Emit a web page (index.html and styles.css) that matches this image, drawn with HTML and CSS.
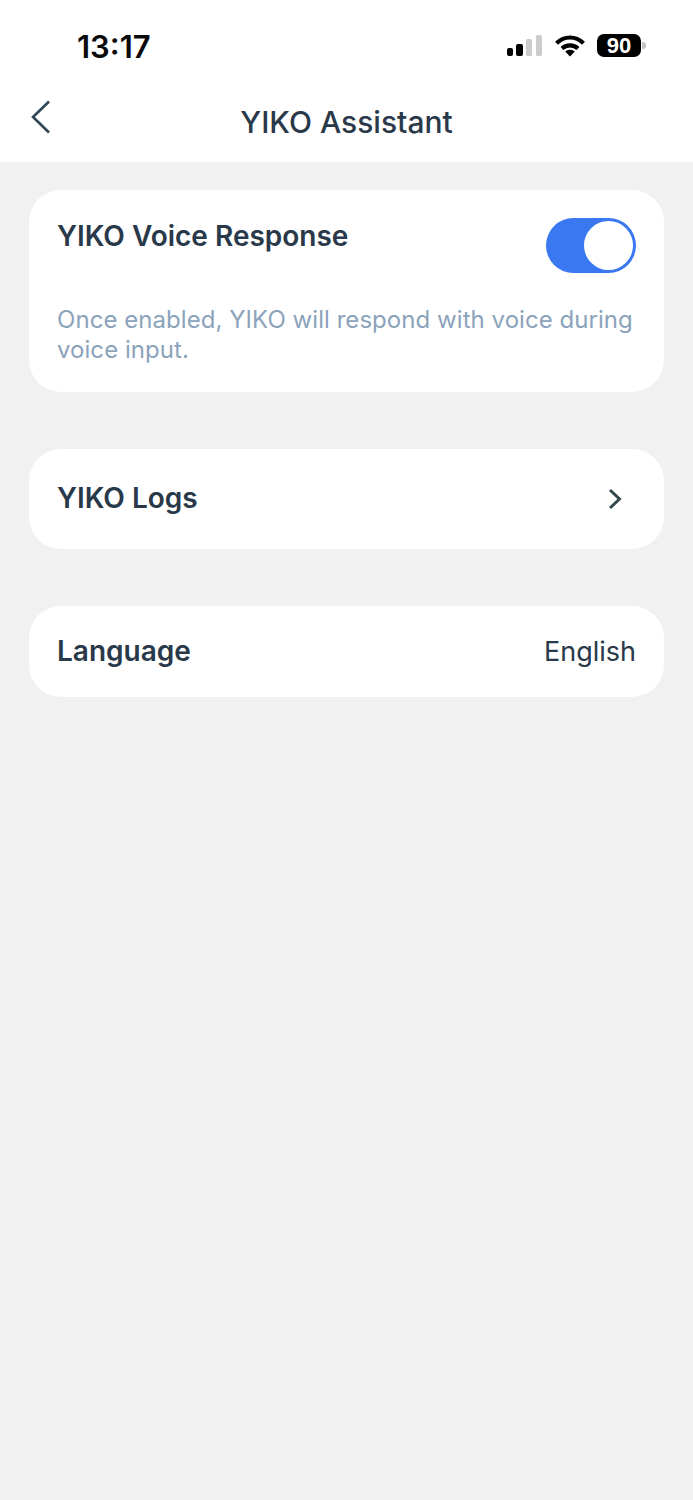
FILE: index.html
```html
<!DOCTYPE html>
<html lang="en">
<head>
<meta charset="utf-8">
<title>YIKO Assistant</title>
<link rel="stylesheet" href="styles.css">
</head>
<body>
<header class="top">
  <div class="status">
    <span class="time">13:17</span>
    <div class="status-icons">
      <svg class="signal" width="36" height="24" viewBox="0 -1 36 24"><rect x="0" y="14" width="6" height="8" rx="2" fill="#000"/><rect x="9" y="10" width="7" height="12" rx="2" fill="#000"/><rect x="19" y="5" width="6" height="17" rx="1.5" fill="#ccc"/><rect x="29" y="1" width="6" height="21" rx="1.5" fill="#ccc"/></svg>
      <svg class="wifi" width="30" height="24" viewBox="0 -1 30 24"><path d="M1.5 9.2C9.5 1.6 20.5 1.6 28.5 9.2" fill="none" stroke="#000" stroke-width="4.2"/><path d="M7 14.5C11.5 10.3 18.5 10.3 23 14.5" fill="none" stroke="#000" stroke-width="4.2"/><path d="M15 22.5l-4.8-5c2.7-2.2 6.900-2.2 9.600 0z" fill="#000"/></svg>
      <div class="battery"><span class="battery-body">90</span><span class="battery-cap"></span></div>
    </div>
  </div>
  <nav class="nav">
    <svg class="back" width="20" height="34" viewBox="0 0 20 34"><path d="M18 1.5L2 17l16 15.5" fill="none" stroke="#2f4656" stroke-width="2.6"/></svg>
    <h1 class="title">YIKO Assistant</h1>
  </nav>
</header>
<main class="content">
  <section class="card card-voice">
    <div class="row-voice">
      <h2 class="label">YIKO Voice Response</h2>
      <span class="toggle"><span class="knob"></span></span>
    </div>
    <p class="hint">Once enabled, YIKO will respond with voice during voice input.</p>
  </section>
  <section class="card card-logs">
    <h2 class="label">YIKO Logs</h2>
    <svg class="chevron" width="14" height="22" viewBox="0 0 14 22"><path d="M2 2l9.5 9-9.5 9" fill="none" stroke="#34484f" stroke-width="3"/></svg>
  </section>
  <section class="card card-language">
    <h2 class="label">Language</h2>
    <span class="value">English</span>
  </section>
</main>
</body>
</html>
```
FILE: styles.css
```css
* { box-sizing: border-box; }
html, body { margin: 0; padding: 0; }
body {
  width: 693px;
  height: 1500px;
  overflow: hidden;
  background: #f1f1f1;
  font-family: Inter, "Noto Sans", sans-serif;
  color: #29394a;
}
.top { background: #fff; height: 162px; display: flex; flex-direction: column; }
.status {
  height: 84px;
  display: flex;
  justify-content: space-between;
  align-items: flex-start;
  padding: 30px 47px 0 77px;
}
.time { font-size: 31px; line-height: 34px; font-weight: 600; color: #0a0a0a; }
.status-icons { display: flex; align-items: center; gap: 12px; padding-top: 3px; }
.battery { display: flex; align-items: center; }
.battery-body {
  width: 44px; height: 23px; border-radius: 7px; background: #000; color: #fff;
  font-size: 22px; font-weight: 700; line-height: 23px; text-align: center;
  font-family: "Liberation Sans", sans-serif;
}
.battery-cap { width: 4px; height: 7px; margin-left: 1px; border-radius: 0 3px 3px 0; background: #c4c4c4; }
.nav { position: relative; flex: 1; display: flex; align-items: center; justify-content: center; padding-bottom: 2px; }
.back { position: absolute; left: 31px; top: 16px; }
.title { margin: 0; font-size: 30px; line-height: 36px; font-weight: 500; color: #29394a; }
.content { padding: 28px 29px 0; display: flex; flex-direction: column; gap: 57px; }
.card { background: #fff; border-radius: 32px; }
.card-voice { height: 202px; padding: 28px 28px 0; }
.row-voice { display: flex; justify-content: space-between; align-items: flex-start; }
.label { margin: 0; font-size: 28px; line-height: 36px; font-weight: 600; color: #29394a; }
.toggle {
  width: 90px; height: 55px; border-radius: 28px; background: #3a78f2;
  display: flex; justify-content: flex-end; align-items: center; padding-right: 3px;
}
.knob { width: 49px; height: 49px; border-radius: 50%; background: #fff; }
.hint { margin: 32px 0 0; font-size: 24px; line-height: 30px; letter-spacing: 0.05px; color: #8ba3bb; }
.card-logs, .card-language { display: flex; justify-content: space-between; align-items: center; padding: 0 28px; }
.card-logs { height: 100px; padding-right: 42px; }
.card-logs .label { margin-top: -2px; }
.card-language { height: 91px; }
.card-language .label { margin-top: -2px; }
.value { font-size: 27px; line-height: 36px; color: #29394a; }
```
